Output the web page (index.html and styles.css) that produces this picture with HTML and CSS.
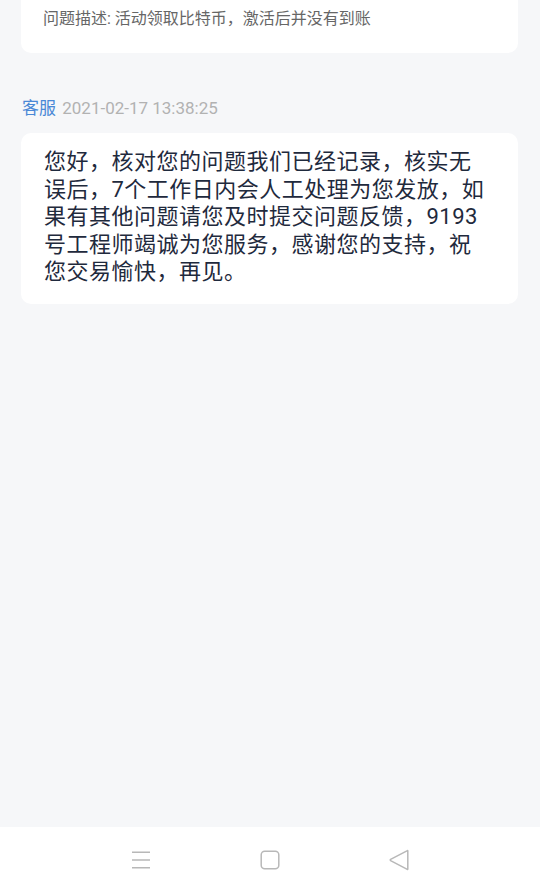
FILE: index.html
```html
<!DOCTYPE html>
<html lang="zh-CN">
<head>
    <meta charset="UTF-8">
    <meta name="viewport" content="width=device-width, initial-scale=1.0">
    <title>客服反馈</title>
    <link rel="stylesheet" href="styles.css">
</head>
<body>
    <main class="chat">
        <div class="card card-top">
            <p class="desc">问题描述: 活动领取比特币，激活后并没有到账</p>
        </div>

        <div class="meta">
            <span class="who">客服</span>
            <span class="time">2021-02-17 13:38:25</span>
        </div>
        <div class="card reply">
            <p>您好，核对您的问题我们已经记录，核实无误后，7个工作日内会人工处理为您发放，如果有其他问题请您及时提交问题反馈，9193号工程师竭诚为您服务，感谢您的支持，祝您交易愉快，再见。</p>
        </div>
    </main>

    <nav class="sys-nav">
        <svg class="nav-icon" width="20" height="20" viewBox="0 0 20 20">
            <path d="M1 2.3h18M1 10h18M1 17.7h18" stroke="#b8b8b8" stroke-width="1.4" fill="none"/>
        </svg>
        <svg class="nav-icon" width="20" height="20" viewBox="0 0 20 20">
            <rect x="1.2" y="1.2" width="17.6" height="17.6" rx="3.5" stroke="#b8b8b8" stroke-width="1.5" fill="none"/>
        </svg>
        <svg class="nav-icon" width="20" height="22" viewBox="0 0 20 22">
            <path d="M18.4 1.6 Q18.8 1.3 18.8 2 L18.8 20 Q18.8 20.7 18.3 20.4 L1.6 11.6 Q1 11 1.6 10.4 Z" stroke="#b8b8b8" stroke-width="1.5" fill="none" stroke-linejoin="round"/>
        </svg>
    </nav>
</body>
</html>
```

FILE: styles.css
```css
/* основа */
html, body {
    height: 100%;
}
body {
    margin: 0;
    background-color: #f6f7f9;
    font-family: Roboto, "Noto Sans CJK SC", sans-serif;
    text-spacing-trim: space-all;
    display: flex;
    flex-direction: column;
    overflow: hidden;
}
.chat {
    flex: 1;
    padding: 0 22px 0 21px;
}
.card {
    background: #fff;
    border-radius: 10px;
}
.card p {
    margin: 0;
}
.card-top {
    border-radius: 0 0 10px 10px;
    padding: 9px 22px 24px 22px;
}
.desc {
    font-size: 16px;
    line-height: 20px;
    color: #666;
}
.meta {
    margin-top: 44px;
    height: 22px;
    line-height: 22px;
    font-size: 17px;
    padding-left: 1px;
}
.who {
    color: #4a88d6;
}
.time {
    color: #b2b2b2;
    margin-left: 2px;
}
.reply {
    margin-top: 14px;
    padding: 15px 29px 18px 23px;
}
.reply p {
    font-size: 22px;
    line-height: 27.5px;
    letter-spacing: 0.5px;
    color: #1f2a3d;
}
.sys-nav {
    height: 66px;
    background: #fff;
    display: flex;
    align-items: center;
    justify-content: center;
    gap: 109px;
}
.nav-icon {
    display: block;
}
```
